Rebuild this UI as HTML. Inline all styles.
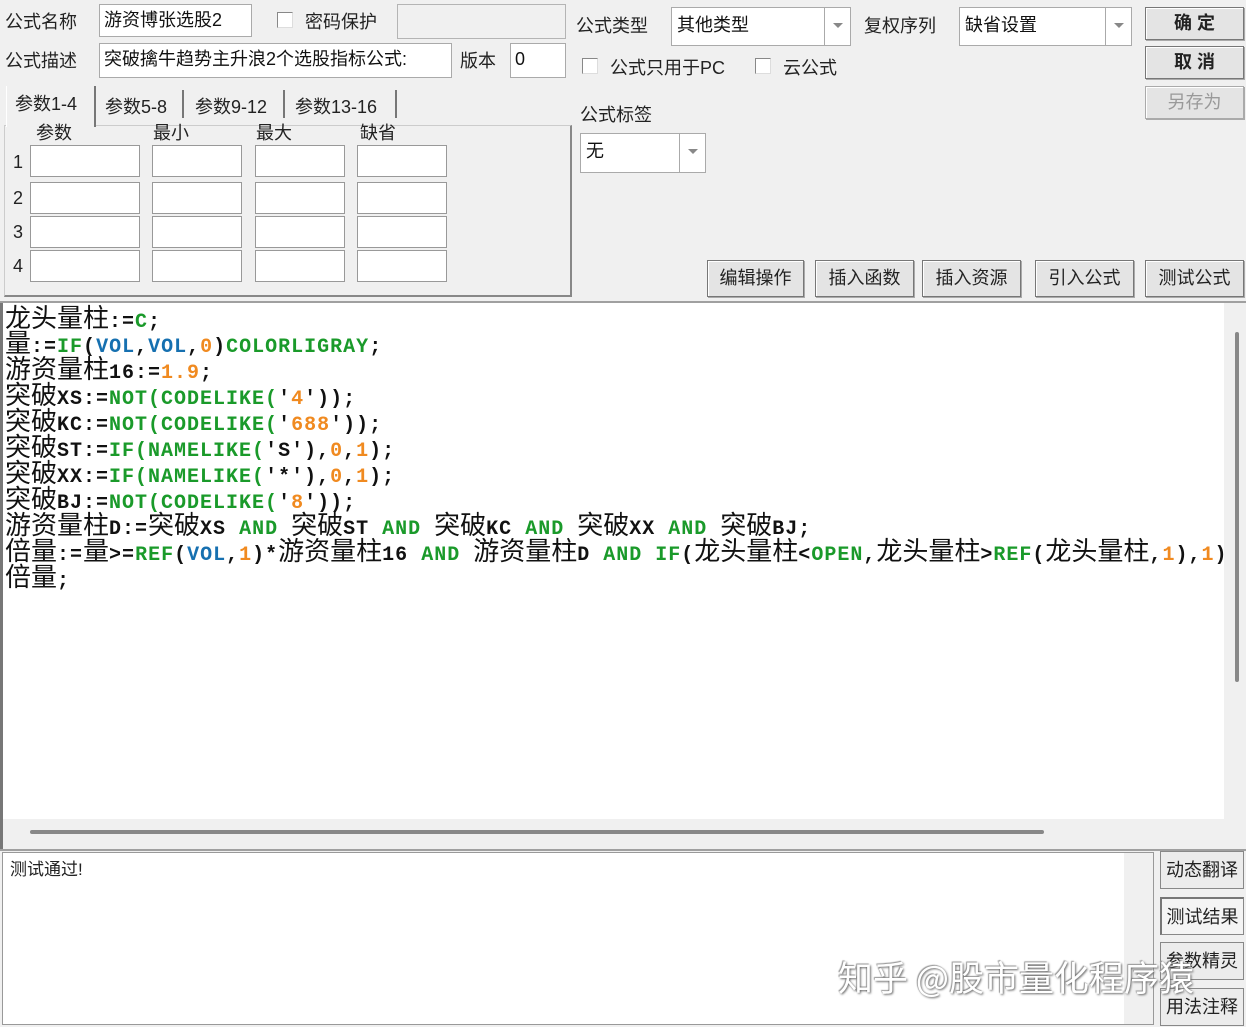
<!DOCTYPE html>
<html><head><meta charset="utf-8"><style>
*{margin:0;padding:0;box-sizing:border-box}
body{width:1246px;height:1027px;background:#f0f0f0;position:relative;overflow:hidden;font-family:"Liberation Sans","Noto Sans CJK SC",sans-serif;color:#111}
.a{position:absolute}
.lbl{position:absolute;font-size:18px;line-height:22px;color:#222}
.in{position:absolute;background:#fff;border:1px solid #aaa;font-size:18px;line-height:30px;padding-left:4px}
.dis{position:absolute;background:#f0f0f0;border:1px solid #b4b4b4}
.cb{position:absolute;width:16px;height:16px;background:#fff;border:1px solid #888;border-right-color:#ddd;border-bottom-color:#ddd}
.btn{position:absolute;background:#e4e4e4;border:1px solid #777;box-shadow:inset 1px 1px 0 #fff,1px 1px 0 #aaa;font-size:18px;text-align:center;color:#222}
.dd{position:absolute;background:#fff;border:1px solid #aaa;font-size:18px;line-height:34px;padding-left:5px}
.dd i{position:absolute;right:0;top:0;bottom:0;width:26px;border-left:1px solid #aaa}
.dd i:after{content:"";position:absolute;left:8px;top:15px;border:5px solid transparent;border-top:5px solid #888}
.pc{position:absolute;width:90px;height:32px;background:#fff;border:1px solid #999}
.code{position:absolute;left:5px;white-space:pre;height:26px;line-height:26px}
.c{font-family:"Noto Sans CJK SC",sans-serif;font-size:26px;color:#111;font-weight:400}
.m{font-family:"Liberation Mono",monospace;font-weight:bold;font-size:20px;letter-spacing:1px}
.k{color:#1a9a2a}.b{color:#1670b0}.o{color:#f08a20}.d{color:#111}
.rb{position:absolute;left:1160px;width:84px;height:38px;background:#ececec;border:1px solid #888;font-size:18px;line-height:36px;text-align:center;color:#222}
.sep{position:absolute;top:90px;width:2px;height:28px;background:#777}
</style></head><body>
<div class="lbl" style="left:5px;top:11px">公式名称</div>
<div class="in" style="left:99px;top:4px;width:153px;height:33px">游资博张选股2</div>
<div class="cb" style="left:277px;top:12px"></div>
<div class="lbl" style="left:305px;top:11px">密码保护</div>
<div class="dis" style="left:397px;top:4px;width:169px;height:35px"></div>
<div class="lbl" style="left:5px;top:50px">公式描述</div>
<div class="in" style="left:99px;top:43px;width:353px;height:35px">突破擒牛趋势主升浪2个选股指标公式:</div>
<div class="lbl" style="left:460px;top:50px">版本</div>
<div class="in" style="left:510px;top:43px;width:56px;height:35px">0</div>

<div class="a" style="left:4px;top:125px;width:568px;height:172px;border:1px solid #ccc;border-right:2px solid #888;border-bottom:2px solid #888;background:#f0f0f0"></div>
<div class="a" style="left:6px;top:86px;width:90px;height:41px;border-left:1px solid #fff;border-right:2px solid #777;background:#f0f0f0"></div>
<div class="lbl" style="left:15px;top:93px">参数1-4</div>
<div class="lbl" style="left:105px;top:96px">参数5-8</div>
<div class="sep" style="left:182px"></div>
<div class="lbl" style="left:195px;top:96px">参数9-12</div>
<div class="sep" style="left:283px"></div>
<div class="lbl" style="left:295px;top:96px">参数13-16</div>
<div class="sep" style="left:395px"></div>
<div class="lbl" style="left:36px;top:122px">参数</div>
<div class="lbl" style="left:153px;top:122px">最小</div>
<div class="lbl" style="left:256px;top:122px">最大</div>
<div class="lbl" style="left:360px;top:122px">缺省</div>
<div class="lbl" style="left:13px;top:151px">1</div><div class="lbl" style="left:13px;top:187px">2</div><div class="lbl" style="left:13px;top:221px">3</div><div class="lbl" style="left:13px;top:255px">4</div>
<div class="pc" style="left:30px;top:145px;width:110px"></div><div class="pc" style="left:152px;top:145px"></div><div class="pc" style="left:255px;top:145px"></div><div class="pc" style="left:357px;top:145px"></div>
<div class="pc" style="left:30px;top:182px;width:110px"></div><div class="pc" style="left:152px;top:182px"></div><div class="pc" style="left:255px;top:182px"></div><div class="pc" style="left:357px;top:182px"></div>
<div class="pc" style="left:30px;top:216px;width:110px"></div><div class="pc" style="left:152px;top:216px"></div><div class="pc" style="left:255px;top:216px"></div><div class="pc" style="left:357px;top:216px"></div>
<div class="pc" style="left:30px;top:250px;width:110px"></div><div class="pc" style="left:152px;top:250px"></div><div class="pc" style="left:255px;top:250px"></div><div class="pc" style="left:357px;top:250px"></div>

<div class="lbl" style="left:576px;top:15px">公式类型</div>
<div class="dd" style="left:671px;top:7px;width:180px;height:39px">其他类型<i></i></div>
<div class="lbl" style="left:864px;top:15px">复权序列</div>
<div class="dd" style="left:959px;top:7px;width:173px;height:39px">缺省设置<i></i></div>
<div class="btn" style="left:1145px;top:7px;width:99px;height:33px;line-height:31px;font-weight:bold">确 定</div>
<div class="btn" style="left:1145px;top:46px;width:99px;height:33px;line-height:31px;font-weight:bold">取 消</div>
<div class="btn" style="left:1145px;top:86px;width:99px;height:33px;line-height:31px;color:#999;border-color:#aaa">另存为</div>
<div class="cb" style="left:582px;top:58px"></div>
<div class="lbl" style="left:610px;top:57px">公式只用于PC</div>
<div class="cb" style="left:755px;top:58px"></div>
<div class="lbl" style="left:783px;top:57px">云公式</div>
<div class="lbl" style="left:580px;top:104px">公式标签</div>
<div class="dd" style="left:580px;top:133px;width:126px;height:40px">无<i></i></div>
<div class="btn" style="left:707px;top:260px;width:97px;height:37px;line-height:35px">编辑操作</div>
<div class="btn" style="left:815px;top:260px;width:99px;height:37px;line-height:35px">插入函数</div>
<div class="btn" style="left:922px;top:260px;width:99px;height:37px;line-height:35px">插入资源</div>
<div class="btn" style="left:1035px;top:260px;width:99px;height:37px;line-height:35px">引入公式</div>
<div class="btn" style="left:1145px;top:260px;width:99px;height:37px;line-height:35px">测试公式</div>

<div class="a" style="left:0;top:301px;width:1246px;height:2px;background:#a0a0a0"></div>
<div class="a" style="left:0;top:303px;width:3px;height:548px;background:#777"></div>
<div class="a" style="left:3px;top:303px;width:1221px;height:516px;background:#fff;overflow:hidden">
<div class="code" style="top:1px;left:2px"><span class="c">龙头量柱</span><span class="m d">:=</span><span class="m k">C</span><span class="m d">;</span></div>
<div class="code" style="top:26px;left:2px"><span class="c">量</span><span class="m d">:=</span><span class="m k">IF</span><span class="m d">(</span><span class="m b">VOL</span><span class="m d">,</span><span class="m b">VOL</span><span class="m d">,</span><span class="m o">0</span><span class="m d">)</span><span class="m k">COLORLIGRAY</span><span class="m d">;</span></div>
<div class="code" style="top:52px;left:2px"><span class="c">游资量柱</span><span class="m d">16:=</span><span class="m o">1.9</span><span class="m d">;</span></div>
<div class="code" style="top:78px;left:2px"><span class="c">突破</span><span class="m d">XS:=</span><span class="m k">NOT(CODELIKE(</span><span class="m d">'</span><span class="m o">4</span><span class="m d">'));</span></div>
<div class="code" style="top:104px;left:2px"><span class="c">突破</span><span class="m d">KC:=</span><span class="m k">NOT(CODELIKE(</span><span class="m d">'</span><span class="m o">688</span><span class="m d">'));</span></div>
<div class="code" style="top:130px;left:2px"><span class="c">突破</span><span class="m d">ST:=</span><span class="m k">IF(NAMELIKE(</span><span class="m d">'S'),</span><span class="m o">0</span><span class="m d">,</span><span class="m o">1</span><span class="m d">);</span></div>
<div class="code" style="top:156px;left:2px"><span class="c">突破</span><span class="m d">XX:=</span><span class="m k">IF(NAMELIKE(</span><span class="m d">'*'),</span><span class="m o">0</span><span class="m d">,</span><span class="m o">1</span><span class="m d">);</span></div>
<div class="code" style="top:182px;left:2px"><span class="c">突破</span><span class="m d">BJ:=</span><span class="m k">NOT(CODELIKE(</span><span class="m d">'</span><span class="m o">8</span><span class="m d">'));</span></div>
<div class="code" style="top:208px;left:2px"><span class="c">游资量柱</span><span class="m d">D:=</span><span class="c">突破</span><span class="m d">XS </span><span class="m k">AND</span><span class="m d"> </span><span class="c">突破</span><span class="m d">ST </span><span class="m k">AND</span><span class="m d"> </span><span class="c">突破</span><span class="m d">KC </span><span class="m k">AND</span><span class="m d"> </span><span class="c">突破</span><span class="m d">XX </span><span class="m k">AND</span><span class="m d"> </span><span class="c">突破</span><span class="m d">BJ;</span></div>
<div class="code" style="top:234px;left:2px"><span class="c">倍量</span><span class="m d">:=</span><span class="c">量</span><span class="m d">&gt;=</span><span class="m k">REF</span><span class="m d">(</span><span class="m b">VOL</span><span class="m d">,</span><span class="m o">1</span><span class="m d">)*</span><span class="c">游资量柱</span><span class="m d">16 </span><span class="m k">AND</span><span class="m d"> </span><span class="c">游资量柱</span><span class="m d">D </span><span class="m k">AND IF</span><span class="m d">(</span><span class="c">龙头量柱</span><span class="m d">&lt;</span><span class="m k">OPEN</span><span class="m d">,</span><span class="c">龙头量柱</span><span class="m d">&gt;</span><span class="m k">REF</span><span class="m d">(</span><span class="c">龙头量柱</span><span class="m d">,</span><span class="m o">1</span><span class="m d">),</span><span class="m o">1</span><span class="m d">);</span></div>
<div class="code" style="top:260px;left:2px"><span class="c">倍量</span><span class="m d">;</span></div>
</div>
<div class="a" style="left:1235px;top:332px;width:4px;height:350px;background:#888;border-radius:2px"></div>
<div class="a" style="left:30px;top:830px;width:1014px;height:4px;background:#888;border-radius:2px"></div>
<div class="a" style="left:0;top:849px;width:1246px;height:2px;background:#a0a0a0"></div>

<div class="a" style="left:2px;top:852px;width:1152px;height:173px;background:#fff;border:1px solid #999"></div>
<div class="a" style="left:1124px;top:853px;width:29px;height:171px;background:#f0f0f0"></div>
<div class="lbl" style="left:10px;top:859px;font-size:17px">测试通过!</div>
<div class="rb" style="top:851px">动态翻译</div>
<div class="rb" style="top:897px;border-left:2px solid #777;border-top:2px solid #777;background:#f4f4f4">测试结果</div>
<div class="rb" style="top:942px">参数精灵</div>
<div class="rb" style="top:988px">用法注释</div>
<div class="a" style="left:838px;top:951px;font-size:35px;color:#fff;text-shadow:1px 1px 2px #666,-1px -1px 1px #999;font-family:'Noto Sans CJK SC',sans-serif;white-space:nowrap">知乎 @股市量化程序猿</div>
</body></html>
